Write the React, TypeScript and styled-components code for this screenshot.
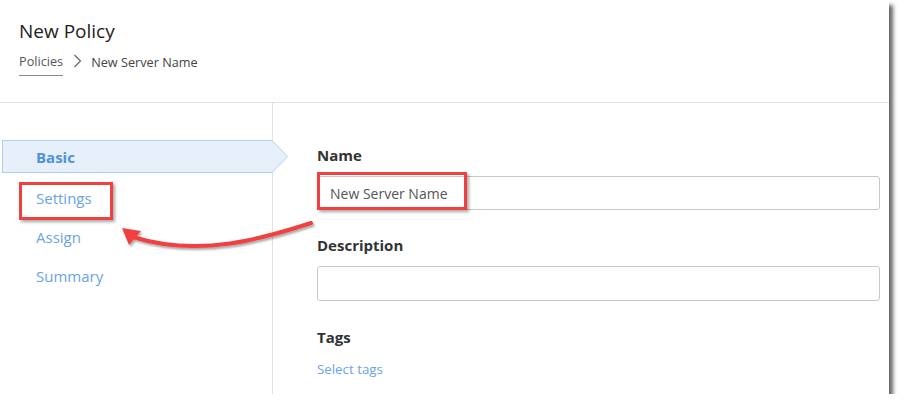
import React from 'react';
import styled, { createGlobalStyle } from 'styled-components';

const GlobalStyle = createGlobalStyle`
  html, body {
    margin: 0;
    padding: 0;
    background: #ffffff;
  }
  body {
    font-family: "Open Sans", "Noto Sans", Arial, sans-serif;
    color: #333;
  }
`;

const Panel = styled.div`
  position: relative;
  width: 889px;
  height: 394px;
  background: #ffffff;
  box-shadow: 4px 5px 4px rgba(0, 0, 0, 0.6);
  display: flex;
  flex-direction: column;
`;

const Header = styled.header`
  height: 103px;
  box-sizing: border-box;
  padding: 18px 19px 0;
  border-bottom: 1px solid #e2e2e2;
`;

const Title = styled.h1`
  margin: 0;
  font-size: 19px;
  font-weight: 400;
  line-height: 26px;
  color: #222;
`;

const Crumbs = styled.nav`
  display: flex;
  align-items: flex-start;
  margin-top: 8px;
  font-size: 12.7px;
  color: #444;
`;

const CrumbLink = styled.span`
  display: inline-block;
  line-height: 18px;
  padding-bottom: 5px;
  border-bottom: 1px solid #8a8a8a;
  color: #555;
`;

const CrumbSep = styled.span`
  display: inline-flex;
  margin: 2px 9px 0 10px;
`;

const CrumbCurrent = styled.span`
  line-height: 18px;
  margin-top: 1px;
`;

const Body = styled.div`
  flex: 1;
  display: grid;
  grid-template-columns: 273px 1fr;
`;

const Side = styled.aside`
  border-right: 1px solid #e2e2e2;
  padding: 37px 0 0 2px;
  position: relative;
  z-index: 1;
`;

const NavItem = styled.div<{ $active?: boolean }>`
  position: relative;
  box-sizing: border-box;
  padding-left: 34px;
  font-size: 15px;
  color: #6aa3e6;
  height: ${(p) => (p.$active ? '33px' : '39px')};
  line-height: ${(p) => (p.$active ? '34px' : '40px')};
  margin-bottom: ${(p) => (p.$active ? '5px' : '0')};
  width: 286px;
  font-weight: ${(p) => (p.$active ? 700 : 400)};
  ${(p) =>
    p.$active &&
    `
    color: #4f92dc;
    &::before, &::after {
      content: '';
      position: absolute;
      inset: 0;
      z-index: -1;
      clip-path: polygon(0 0, 270px 0, 100% 50%, 270px 100%, 0 100%);
    }
    &::before { background: #a9d1f3; }
    &::after {
      inset: 1px 1px 1px 1px;
      background: #e7f0fa;
      clip-path: polygon(0 0, 269px 0, 100% 50%, 269px 100%, 0 100%);
    }
  `}
`;

const Form = styled.section`
  padding: 42px 9px 0 44px;
`;

const Label = styled.div<{ $gap?: number }>`
  font-size: 15px;
  font-weight: 700;
  line-height: 20px;
  color: #333;
  margin-top: ${(p) => p.$gap ?? 0}px;
`;

const Field = styled.div<{ $h: number }>`
  margin-top: 11px;
  box-sizing: border-box;
  height: ${(p) => p.$h}px;
  border: 1px solid #c8c8c8;
  border-radius: 3px;
  padding: 0 12px;
  display: flex;
  align-items: center;
  font-size: 14px;
  color: #555;
`;

const LinkText = styled.div`
  margin-top: 12px;
  font-size: 13.3px;
  line-height: 20px;
  color: #6aa3e6;
`;

const Callout = styled.div<{ $x: number; $y: number; $w: number; $h: number }>`
  position: absolute;
  left: ${(p) => p.$x}px;
  top: ${(p) => p.$y}px;
  width: ${(p) => p.$w}px;
  height: ${(p) => p.$h}px;
  box-sizing: border-box;
  border: 3px solid #f0403f;
  box-shadow: 2px 2px 3px rgba(0, 0, 0, 0.35);
  z-index: 3;
`;

const Overlay = styled.svg`
  position: absolute;
  left: 0;
  top: 0;
  z-index: 4;
  pointer-events: none;
`;

function Chevron() {
  return (
    <svg width="9" height="14" viewBox="0 0 9 14">
      <polyline points="1.5,1 7.5,7 1.5,13" fill="none" stroke="#666" strokeWidth="1.2" />
    </svg>
  );
}

export default function App() {
  return (
    <>
      <GlobalStyle />
      <Panel>
        <Header>
          <Title>New Policy</Title>
          <Crumbs>
            <CrumbLink>Policies</CrumbLink>
            <CrumbSep>
              <Chevron />
            </CrumbSep>
            <CrumbCurrent>New Server Name</CrumbCurrent>
          </Crumbs>
        </Header>
        <Body>
          <Side>
            <NavItem $active>Basic</NavItem>
            <NavItem>Settings</NavItem>
            <NavItem>Assign</NavItem>
            <NavItem>Summary</NavItem>
          </Side>
          <Form>
            <Label>Name</Label>
            <Field $h={34}>New Server Name</Field>
            <Label $gap={25}>Description</Label>
            <Field $h={35} />
            <Label $gap={26}>Tags</Label>
            <LinkText>Select tags</LinkText>
          </Form>
        </Body>

        <Callout $x={19} $y={182} $w={94} $h={38} />
        <Callout $x={317} $y={172} $w={150} $h={38} />

        <Overlay width="889" height="394" viewBox="0 0 889 394">
          <defs>
            <filter id="arrowShadow" x="-10%" y="-30%" width="120%" height="160%">
              <feDropShadow dx="1.5" dy="2" stdDeviation="1.2" floodColor="#000" floodOpacity="0.35" />
            </filter>
          </defs>
          <g filter="url(#arrowShadow)">
            <path
              d="M311 223 C 265 238, 200 258, 133 237"
              fill="none"
              stroke="#f0403f"
              strokeWidth="4"
              strokeLinecap="round"
            />
            <polygon points="122,228 141,231 129,245" fill="#f0403f" />
          </g>
        </Overlay>
      </Panel>
    </>
  );
}
